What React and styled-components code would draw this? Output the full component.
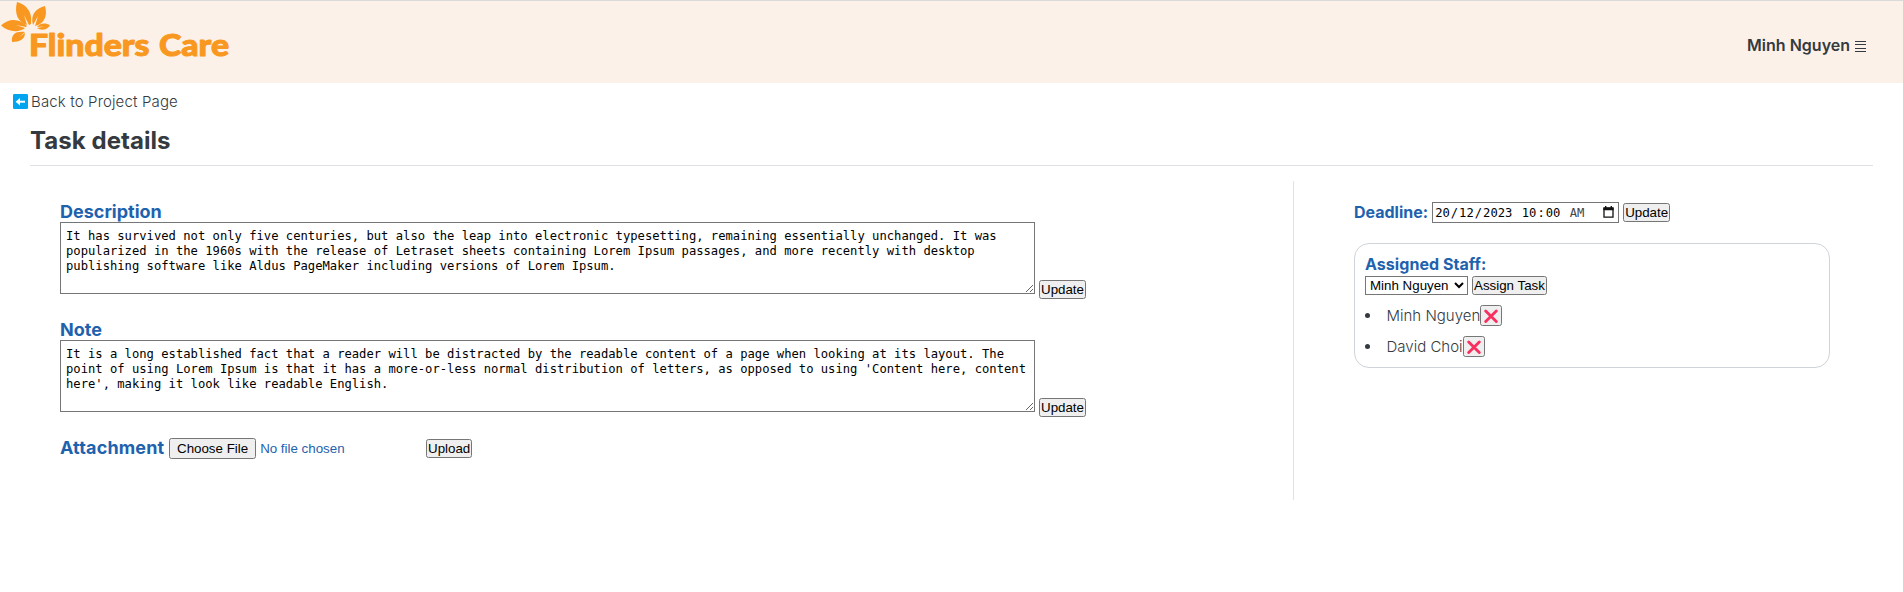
import React from "react";
import styled, { createGlobalStyle } from "styled-components";

const Global = createGlobalStyle`
  *, *::before, *::after { box-sizing: border-box; }
  body {
    margin: 0;
    background: #fff;
    color: #343a40;
    font-family: Inter, "Liberation Sans", sans-serif;
    font-size: 15px;
    line-height: 22px;
    font-weight: 300;
  }
`;

const Header = styled.header`
  display: flex;
  justify-content: space-between;
  align-items: flex-start;
  height: 83px;
  padding-right: 37px;
  border-top: 1px solid #dadadc;
  background: #fcf1e9;
`;
const Logo = styled.svg`
  display: block;
  width: 240px;
  height: 64px;
`;
const UserMenu = styled.div`
  display: flex;
  align-items: center;
  gap: 5px;
  height: 24px;
  margin-top: 32px;
  font-size: 16px;
  font-weight: 600;
`;
const Bars = styled.svg`
  width: 11px;
  height: 11px;
  margin-top: 3px;
`;

const Back = styled.a`
  display: flex;
  align-items: center;
  gap: 3px;
  width: max-content;
  margin: 8px 0 0 13px;
  color: #343a40;
  letter-spacing: 0.14px;
  text-decoration: none;
  svg {
    margin-bottom: 1px;
  }
`;
const Page = styled.main`
  margin: 0 30px;
`;
const Title = styled.h1`
  margin: 0;
  padding: 13px 0 10px;
  border-bottom: 1px solid #dee2e6;
  font-size: 24px;
  line-height: 29px;
  font-weight: 650;
  letter-spacing: 0.05px;
`;
const Columns = styled.div`
  display: flex;
  height: 319px;
  margin-top: 15px;
`;
const Main = styled.section`
  width: 1264px;
  padding: 21px 30px 0;
  border-right: 1px solid #dee2e6;
`;
const Side = styled.section`
  flex: 1;
  padding: 21px 43px 0 60px;
`;
const Label = styled.span`
  color: #1e62ae;
  font-size: ${(p) => p.$size || 18}px;
  line-height: 20px;
  font-weight: 650;
  letter-spacing: ${(p) => p.$track || 0}px;
`;
const Field = styled.div`
  display: flex;
  flex-direction: column;
  height: 118px;
`;
const FieldRow = styled.div`
  display: flex;
  align-items: flex-end;
  gap: 4px;
`;
const TextBox = styled.textarea`
  width: 975px;
  height: 72px;
  margin: 0;
  padding: 6px 5px;
  border: 1px solid #767676;
  color: #000;
  font: 400 12.18px/15px "DejaVu Sans Mono", "Liberation Mono", monospace;
`;
const Button = styled.button`
  height: 19px;
  margin: 0 0 ${(p) => p.$drop || 0}px;
  padding: 0;
  color: #000;
  font: 400 13.333px/15px "Liberation Sans", Arial, sans-serif;
`;
const Row = styled.div`
  display: flex;
  align-items: center;
  gap: 4px;
`;
const FileRow = styled(Row)`
  label {
    width: 105px;
    padding-bottom: 1px;
  }
`;
const DeadlineRow = styled(Row)`
  height: 21px;
  ${Label} {
    padding-bottom: 2px;
  }
`;
const FileInput = styled.input`
  width: 253px;
  height: 21px;
  color: #1e62ae;
  font: 400 13.333px/15px "Liberation Sans", Arial, sans-serif;
`;
const DateField = styled.div`
  display: flex;
  align-items: center;
  width: 187px;
  height: 21px;
  padding: 1px 4px 0 1px;
  border: 1px solid #767676;
  color: #000;
  white-space: pre;
  font: 400 12.18px/16px "DejaVu Sans Mono", "Liberation Mono", monospace;
  svg {
    margin: 0 0 2px auto;
  }
`;
const DatePart = styled.span`
  padding: 0 1px;
  color: ${(p) => (p.$soft ? "#444" : "#000")};
`;
const Card = styled.div`
  height: 125px;
  margin-top: 20px;
  padding: 10px;
  border: 1px solid #ced4da;
  border-radius: 15px;
`;
const Select = styled.select`
  width: 103px;
  height: 19px;
  padding: 0;
  background: #fff;
  color: #000;
  font: 400 13.333px/15px "Liberation Sans", Arial, sans-serif;
`;
const StaffList = styled.ul`
  margin: 10px 0 0;
  padding: 0;
  list-style: none;
`;
const Staff = styled.li`
  display: flex;
  align-items: center;
  height: 21px;
  margin-bottom: 10px;
  &::before {
    content: "";
    width: 5px;
    height: 5px;
    margin-right: 16.5px;
    border-radius: 50%;
    background: #343a40;
  }
`;
const Remove = styled(Button)`
  display: grid;
  place-items: center;
  width: 22px;
  height: 21px;
`;

const BackIcon = () => (
  <svg width="15" height="15" viewBox="0 0 15 15">
    <rect width="15" height="15" rx="1.3" fill="#00a4ef" />
    <path d="M4 7.7h8" stroke="#fff" strokeWidth="2" />
    <path d="M2.6 7.7L7 4v7.4z" fill="#fff" />
  </svg>
);
const CrossIcon = () => (
  <svg width="14" height="14" viewBox="0 0 14 14">
    <path d="M1.7 2l10.6 10.6M12.3 2L1.7 12.6" stroke="#f92f60" strokeWidth="2.8" strokeLinecap="round" />
  </svg>
);
const CalendarIcon = () => (
  <svg width="11" height="12" viewBox="0 0 11 12">
    <path d="M1 2.5h9v8.7H1z" fill="none" stroke="#111" strokeWidth="1.3" />
    <path d="M.4 1.2h10.2v3H.4zM2 0h1.4v2H2zM7.6 0H9v2H7.6z" fill="#111" />
  </svg>
);

const notes = [
  {
    label: "Description",
    text: "It has survived not only five centuries, but also the leap into electronic typesetting, remaining essentially unchanged. It was popularized in the 1960s with the release of Letraset sheets containing Lorem Ipsum passages, and more recently with desktop publishing software like Aldus PageMaker including versions of Lorem Ipsum.",
  },
  {
    label: "Note",
    text: "It is a long established fact that a reader will be distracted by the readable content of a page when looking at its layout. The point of using Lorem Ipsum is that it has a more-or-less normal distribution of letters, as opposed to using 'Content here, content here', making it look like readable English.",
  },
];

export default function App() {
  return (
    <>
      <Global />
      <Header>
        <Logo viewBox="0 0 240 64">
          <g fill="#f99820">
            <path d="M17 1C25 3 33 10 31 23L29 24L24 14L27 24C18 21 14 13 17 1Z" />
            <path d="M45 5C48 15 44 23 35 25L38 15L33 24C30 14 36 7 45 5Z" />
            <path d="M1 24.5C8 17 20 17 27 25L26 26L16 24L25 27C19 32 8 31 1 24.5Z" />
            <path d="M50 24.5C47 29 41 30 37 27L44 25.5L37 26C40 22 46 21.5 50 24.5Z" />
            <path d="M12 41C11 33 16 30 25 31L19 36L25 32C25 38 20 41 12 41Z" />
          </g>
          <g fill="#f99820" stroke="#f99820" strokeWidth="1" strokeLinejoin="round" fontFamily="Lato, sans-serif" fontWeight="900" fontSize="31">
            <text x="29" y="54.7" textLength="120.5" lengthAdjust="spacingAndGlyphs">Flinders</text>
            <text x="159" y="54.7" textLength="70" lengthAdjust="spacingAndGlyphs">Care</text>
          </g>
        </Logo>
        <UserMenu>
          Minh Nguyen
          <Bars viewBox="0 0 11 11" stroke="#343a40">
            <path d="M0 .5h11M0 3.5h11M0 7.5h11M0 10.5h11" />
          </Bars>
        </UserMenu>
      </Header>
      <Back href="#">
        <BackIcon />
        Back to Project Page
      </Back>
      <Page>
        <Title>Task details</Title>
        <Columns>
          <Main>
            {notes.map((n) => (
              <Field key={n.label}>
                <Label>{n.label}</Label>
                <FieldRow>
                  <TextBox defaultValue={n.text} spellCheck={false} />
                  <Button $drop={-5}>Update</Button>
                </FieldRow>
              </Field>
            ))}
            <FileRow>
              <Label as="label" $track={0.15}>Attachment</Label>
              <FileInput type="file" />
              <Button>Upload</Button>
            </FileRow>
          </Main>
          <Side>
            <DeadlineRow>
              <Label $size={16}>Deadline:</Label>
              <DateField>
                <span>
                  <DatePart>20</DatePart>/<DatePart>12</DatePart>/<DatePart>2023</DatePart>{" "}
                  <DatePart>10</DatePart>:<DatePart>00</DatePart>{" "}
                  <DatePart $soft>AM</DatePart>
                </span>
                <CalendarIcon />
              </DateField>
              <Button>Update</Button>
            </DeadlineRow>
            <Card>
              <Label $size={16} $track={0.05}>Assigned Staff:</Label>
              <Row>
                <Select defaultValue="Minh Nguyen">
                  <option>Minh Nguyen</option>
                  <option>David Choi</option>
                </Select>
                <Button>Assign Task</Button>
              </Row>
              <StaffList>
                {["Minh Nguyen", "David Choi"].map((name) => (
                  <Staff key={name}>
                    {name}
                    <Remove aria-label="Remove">
                      <CrossIcon />
                    </Remove>
                  </Staff>
                ))}
              </StaffList>
            </Card>
          </Side>
        </Columns>
      </Page>
    </>
  );
}
